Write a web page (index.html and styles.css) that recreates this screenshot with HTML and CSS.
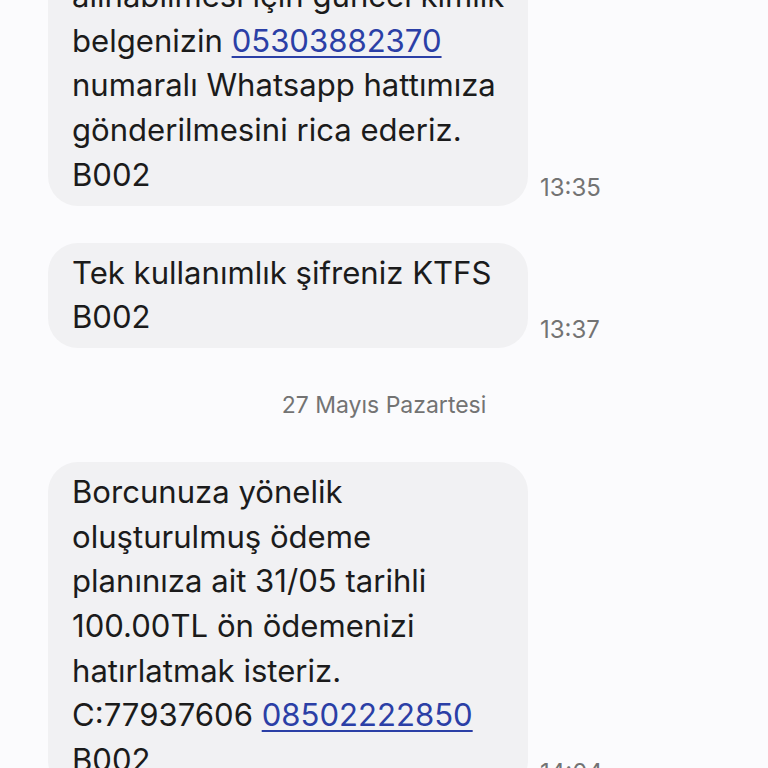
FILE: index.html
```html
<!DOCTYPE html>
<html lang="tr">

<head>
    <meta charset="UTF-8">
    <meta name="viewport" content="width=device-width, initial-scale=1.0">
    <title>Mesajlar</title>
    <link rel="stylesheet" href="styles.css">
</head>

<body>
    <main class="thread">

        <div class="msg">
            <div class="bubble">
                alınabilmesi için güncel kimlik<br>belgenizin <a href="#" class="num">05303882370</a><br>
                numaralı Whatsapp hattımıza<br>gönderilmesini rica ederiz.<br>B002
            </div>
            <span class="time">13:35</span>
        </div>

        <div class="msg">
            <div class="bubble">
                Tek kullanımlık şifreniz KTFS<br>B002
            </div>
            <span class="time">13:37</span>
        </div>

        <div class="date">27 Mayıs Pazartesi</div>

        <div class="msg">
            <div class="bubble">
                Borcunuza yönelik<br>oluşturulmuş ödeme<br>planınıza ait 31/05 tarihli<br>100.00TL ön ödemenizi<br>
                hatırlatmak isteriz.<br>C:77937606 <a href="#" class="num">08502222850</a><br>B002
            </div>
            <span class="time">14:04</span>
        </div>

    </main>
</body>

</html>
```

FILE: styles.css
```css
:root {
    --bg: #fbfbfd;
    --bubble: #f1f1f3;
    --ink: #1b1b1b;
    --muted: #737373;
    --link: #2b3fa6;
}

body {
    margin: 0;
    background: var(--bg);
    font-family: Inter, "Noto Sans", sans-serif;
    color: var(--ink);
    overflow: hidden;
}

.thread {
    display: flex;
    flex-direction: column;
    gap: 37px;
    margin-top: -34px;
    padding-left: 48px;
}

.msg {
    display: flex;
    align-items: flex-end;
    gap: 12px;
}

.bubble {
    width: 432px;
    padding: 8px 24px;
    background: var(--bubble);
    border-radius: 30px;
    font-size: 31.1px;
    line-height: 44.7px;
    white-space: nowrap;
}

.num {
    color: var(--link);
    text-decoration: underline;
    text-decoration-thickness: 2px;
    text-underline-offset: 4px;
}

.time {
    font-size: 24px;
    line-height: 28px;
    color: var(--muted);
    padding-bottom: 4px;
}

.date {
    text-align: center;
    margin-left: -48px;
    font-size: 23px;
    color: var(--muted);
    margin-top: 6px;
    margin-bottom: 6px;
}
```
